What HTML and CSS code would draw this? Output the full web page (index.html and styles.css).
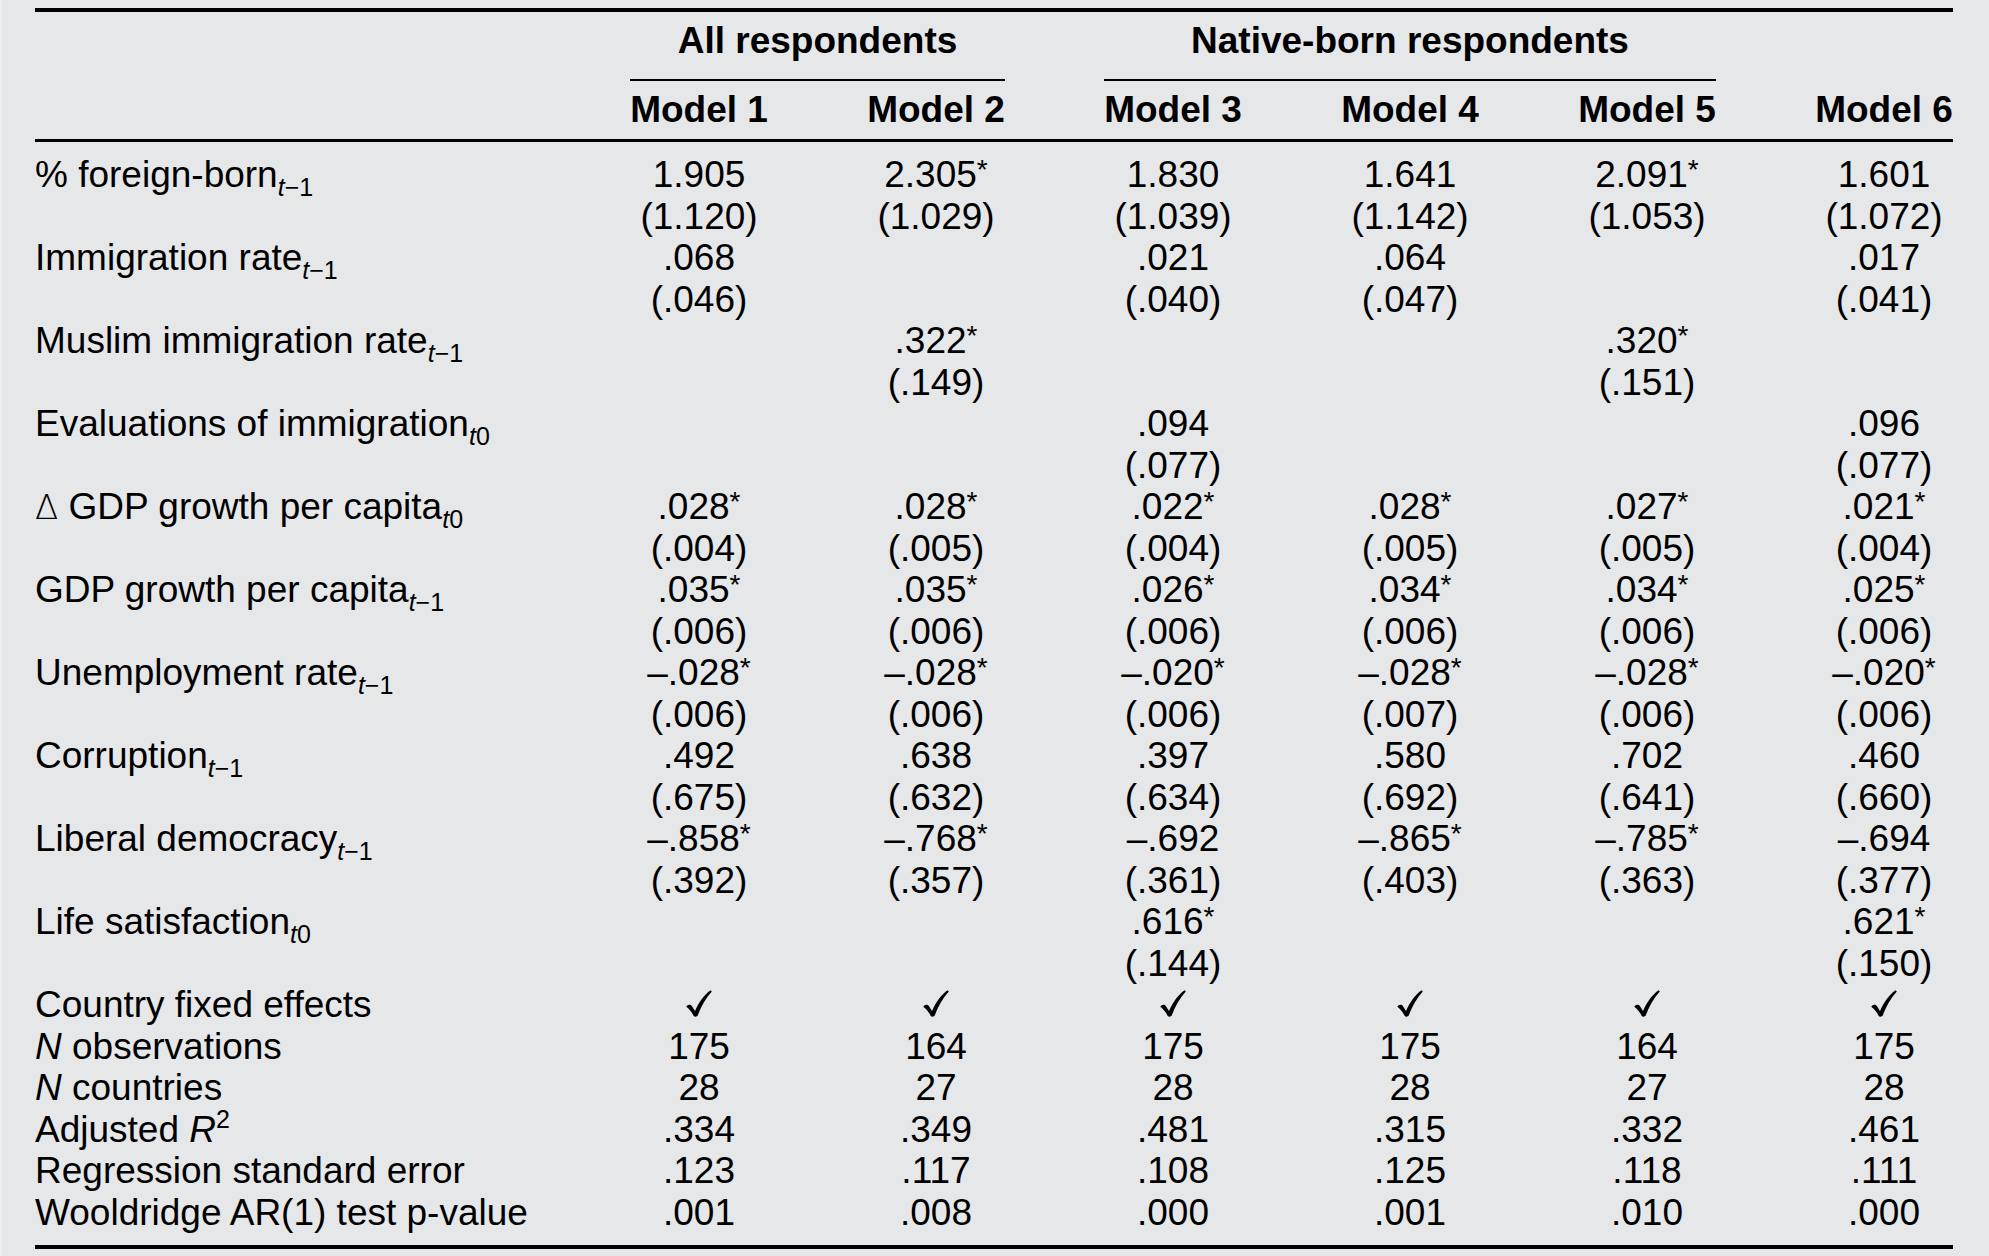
FILE: index.html
```html
<!DOCTYPE html>
<html lang="en">
<head>
<meta charset="utf-8">
<title>Regression table</title>
<link rel="stylesheet" href="styles.css">
</head>
<body>
<svg class="defs" width="0" height="0" aria-hidden="true">
  <defs>
    <path id="chk" d="M0.3 16.8 C1.5 14.6 4.3 14 6 16.3 L9 21 C13 12 18 5 24.6 0.3 L25.8 1.4 C19.4 8.6 14.8 16.6 11.7 25.6 C11 27 8.4 27.2 7.6 25.8 C5.8 22.2 3.2 18.8 0.3 16.8 Z"/>
  </defs>
</svg>
<div class="table">
  <div class="grid head1">
    <div class="span span-all">All respondents</div>
    <div class="span span-native">Native-born respondents</div>
  </div>
  <div class="grid head2">
    <div></div>
    <div class="m">Model 1</div>
    <div class="m">Model 2</div>
    <div class="m">Model 3</div>
    <div class="m">Model 4</div>
    <div class="m">Model 5</div>
    <div class="m">Model 6</div>
  </div>
  <div class="tbody">
    <div class="grid">
      <div class="label">% foreign-born<span class="sub"><i>t</i>−1</span></div>
      <div class="cell"><div>1.905</div><div>(1.120)</div></div>
      <div class="cell"><div>2.305<span class="star">*</span></div><div>(1.029)</div></div>
      <div class="cell"><div>1.830</div><div>(1.039)</div></div>
      <div class="cell"><div>1.641</div><div>(1.142)</div></div>
      <div class="cell"><div>2.091<span class="star">*</span></div><div>(1.053)</div></div>
      <div class="cell"><div>1.601</div><div>(1.072)</div></div>
    </div>
    <div class="grid">
      <div class="label">Immigration rate<span class="sub"><i>t</i>−1</span></div>
      <div class="cell"><div>.068</div><div>(.046)</div></div>
      <div class="cell"></div>
      <div class="cell"><div>.021</div><div>(.040)</div></div>
      <div class="cell"><div>.064</div><div>(.047)</div></div>
      <div class="cell"></div>
      <div class="cell"><div>.017</div><div>(.041)</div></div>
    </div>
    <div class="grid">
      <div class="label">Muslim immigration rate<span class="sub"><i>t</i>−1</span></div>
      <div class="cell"></div>
      <div class="cell"><div>.322<span class="star">*</span></div><div>(.149)</div></div>
      <div class="cell"></div>
      <div class="cell"></div>
      <div class="cell"><div>.320<span class="star">*</span></div><div>(.151)</div></div>
      <div class="cell"></div>
    </div>
    <div class="grid">
      <div class="label">Evaluations of immigration<span class="sub"><i>t</i>0</span></div>
      <div class="cell"></div>
      <div class="cell"></div>
      <div class="cell"><div>.094</div><div>(.077)</div></div>
      <div class="cell"></div>
      <div class="cell"></div>
      <div class="cell"><div>.096</div><div>(.077)</div></div>
    </div>
    <div class="grid">
      <div class="label"><span class="delta">Δ</span> GDP growth per capita<span class="sub"><i>t</i>0</span></div>
      <div class="cell"><div>.028<span class="star">*</span></div><div>(.004)</div></div>
      <div class="cell"><div>.028<span class="star">*</span></div><div>(.005)</div></div>
      <div class="cell"><div>.022<span class="star">*</span></div><div>(.004)</div></div>
      <div class="cell"><div>.028<span class="star">*</span></div><div>(.005)</div></div>
      <div class="cell"><div>.027<span class="star">*</span></div><div>(.005)</div></div>
      <div class="cell"><div>.021<span class="star">*</span></div><div>(.004)</div></div>
    </div>
    <div class="grid">
      <div class="label">GDP growth per capita<span class="sub"><i>t</i>−1</span></div>
      <div class="cell"><div>.035<span class="star">*</span></div><div>(.006)</div></div>
      <div class="cell"><div>.035<span class="star">*</span></div><div>(.006)</div></div>
      <div class="cell"><div>.026<span class="star">*</span></div><div>(.006)</div></div>
      <div class="cell"><div>.034<span class="star">*</span></div><div>(.006)</div></div>
      <div class="cell"><div>.034<span class="star">*</span></div><div>(.006)</div></div>
      <div class="cell"><div>.025<span class="star">*</span></div><div>(.006)</div></div>
    </div>
    <div class="grid">
      <div class="label">Unemployment rate<span class="sub"><i>t</i>−1</span></div>
      <div class="cell"><div>–.028<span class="star">*</span></div><div>(.006)</div></div>
      <div class="cell"><div>–.028<span class="star">*</span></div><div>(.006)</div></div>
      <div class="cell"><div>–.020<span class="star">*</span></div><div>(.006)</div></div>
      <div class="cell"><div>–.028<span class="star">*</span></div><div>(.007)</div></div>
      <div class="cell"><div>–.028<span class="star">*</span></div><div>(.006)</div></div>
      <div class="cell"><div>–.020<span class="star">*</span></div><div>(.006)</div></div>
    </div>
    <div class="grid">
      <div class="label">Corruption<span class="sub"><i>t</i>−1</span></div>
      <div class="cell"><div>.492</div><div>(.675)</div></div>
      <div class="cell"><div>.638</div><div>(.632)</div></div>
      <div class="cell"><div>.397</div><div>(.634)</div></div>
      <div class="cell"><div>.580</div><div>(.692)</div></div>
      <div class="cell"><div>.702</div><div>(.641)</div></div>
      <div class="cell"><div>.460</div><div>(.660)</div></div>
    </div>
    <div class="grid">
      <div class="label">Liberal democracy<span class="sub"><i>t</i>−1</span></div>
      <div class="cell"><div>–.858<span class="star">*</span></div><div>(.392)</div></div>
      <div class="cell"><div>–.768<span class="star">*</span></div><div>(.357)</div></div>
      <div class="cell"><div>–.692</div><div>(.361)</div></div>
      <div class="cell"><div>–.865<span class="star">*</span></div><div>(.403)</div></div>
      <div class="cell"><div>–.785<span class="star">*</span></div><div>(.363)</div></div>
      <div class="cell"><div>–.694</div><div>(.377)</div></div>
    </div>
    <div class="grid">
      <div class="label">Life satisfaction<span class="sub"><i>t</i>0</span></div>
      <div class="cell"></div>
      <div class="cell"></div>
      <div class="cell"><div>.616<span class="star">*</span></div><div>(.144)</div></div>
      <div class="cell"></div>
      <div class="cell"></div>
      <div class="cell"><div>.621<span class="star">*</span></div><div>(.150)</div></div>
    </div>
    <div class="grid">
      <div class="label">Country fixed effects</div>
      <div class="cell"><svg class="check" viewBox="0 0 26 27" aria-label="yes"><use href="#chk"/></svg></div>
      <div class="cell"><svg class="check" viewBox="0 0 26 27" aria-label="yes"><use href="#chk"/></svg></div>
      <div class="cell"><svg class="check" viewBox="0 0 26 27" aria-label="yes"><use href="#chk"/></svg></div>
      <div class="cell"><svg class="check" viewBox="0 0 26 27" aria-label="yes"><use href="#chk"/></svg></div>
      <div class="cell"><svg class="check" viewBox="0 0 26 27" aria-label="yes"><use href="#chk"/></svg></div>
      <div class="cell"><svg class="check" viewBox="0 0 26 27" aria-label="yes"><use href="#chk"/></svg></div>
    </div>
    <div class="grid">
      <div class="label"><i>N</i> observations</div>
      <div class="cell">175</div><div class="cell">164</div><div class="cell">175</div>
      <div class="cell">175</div><div class="cell">164</div><div class="cell">175</div>
    </div>
    <div class="grid">
      <div class="label"><i>N</i> countries</div>
      <div class="cell">28</div><div class="cell">27</div><div class="cell">28</div>
      <div class="cell">28</div><div class="cell">27</div><div class="cell">28</div>
    </div>
    <div class="grid">
      <div class="label">Adjusted <i>R</i><span class="sup">2</span></div>
      <div class="cell">.334</div><div class="cell">.349</div><div class="cell">.481</div>
      <div class="cell">.315</div><div class="cell">.332</div><div class="cell">.461</div>
    </div>
    <div class="grid">
      <div class="label">Regression standard error</div>
      <div class="cell">.123</div><div class="cell">.117</div><div class="cell">.108</div>
      <div class="cell">.125</div><div class="cell">.118</div><div class="cell">.111</div>
    </div>
    <div class="grid">
      <div class="label">Wooldridge AR(1) test p-value</div>
      <div class="cell">.001</div><div class="cell">.008</div><div class="cell">.000</div>
      <div class="cell">.001</div><div class="cell">.010</div><div class="cell">.000</div>
    </div>
  </div>
</div>
</body>
</html>
```

FILE: styles.css
```css
* {
  box-sizing: border-box;
}

html {
  background: #e6e7e9;
}

body {
  margin: 0;
  padding: 8px 36px 0 33px;
  border-left: 2px solid #eeeff0;
  min-height: 1256px;
  background: #e6e7e9;
  color: #000;
  font-family: "Liberation Sans", Arial, Helvetica, sans-serif;
  font-size: 37px;
}

.defs {
  position: absolute;
  width: 0;
  height: 0;
  overflow: hidden;
}

.table {
  width: 1918px;
  border-top: 4px solid #000;
  border-bottom: 4px solid #000;
}

.grid {
  display: grid;
  grid-template-columns: 496px repeat(6, 138px);
  column-gap: 99px;
  line-height: 41.5px;
}

.head1 {
  padding-top: 8px;
}

.span {
  text-align: center;
  font-weight: bold;
  white-space: nowrap;
  padding-bottom: 17.5px;
  border-bottom: 2px solid #000;
}

.span-all {
  grid-column: 2 / 4;
}

.span-native {
  grid-column: 4 / 7;
}

.head2 {
  padding: 8px 0 8.5px;
  border-bottom: 3px solid #000;
  font-weight: bold;
}

.m {
  text-align: center;
  white-space: nowrap;
}

.tbody {
  padding: 12px 0;
}

.label {
  white-space: nowrap;
}

.cell {
  text-align: center;
  white-space: nowrap;
}

.sub {
  font-size: 25px;
  line-height: 0;
  vertical-align: -9px;
}

.sup {
  font-size: 25px;
  line-height: 0;
  vertical-align: 14px;
}

.star {
  font-size: 28px;
  line-height: 0;
  vertical-align: 8px;
}

.delta {
  font-family: "DejaVu Sans", sans-serif;
  font-size: 34px;
  font-weight: 200;
}

.check {
  display: inline-block;
  width: 26px;
  height: 27px;
  vertical-align: 0;
  fill: #000;
}
```
